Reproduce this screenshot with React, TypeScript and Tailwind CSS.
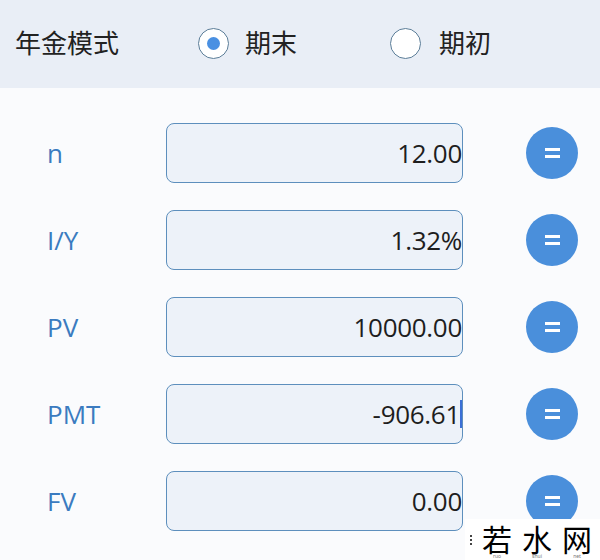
import { useState } from 'react'

const ROWS = [
  { label: 'n', value: '12.00' },
  { label: 'I/Y', value: '1.32%' },
  { label: 'PV', value: '10000.00' },
  { label: 'PMT', value: '-906.61', caret: true },
  { label: 'FV', value: '0.00' },
]

const MARK = [
  { char: '若', sub: 'ruo' },
  { char: '水', sub: 'shui' },
  { char: '网', sub: 'net' },
]

function Radio({ checked }: { checked: boolean }) {
  return (
    <span className="w-[31px] h-[31px] rounded-full border-[1.5px] border-[#5b7d98] bg-white flex items-center justify-center">
      {checked && <span className="w-[13px] h-[13px] rounded-full bg-[#4a90e2]" />}
    </span>
  )
}

function EqualsButton() {
  return (
    <button className="w-[52px] h-[52px] rounded-full bg-[#4a8fdb] flex flex-col items-center justify-center gap-[4px] shrink-0">
      <span className="w-[15px] h-[3px] bg-white" />
      <span className="w-[15px] h-[3px] bg-white" />
    </button>
  )
}

export default function App() {
  const [mode, setMode] = useState<'end' | 'begin'>('end')

  return (
    <div
      className="relative w-[600px] h-[560px] overflow-hidden bg-[#fafbfd]"
      style={{ fontFamily: '"Noto Sans", "Noto Sans CJK SC", sans-serif' }}
    >
      {/* Annuity mode */}
      <div className="h-[88px] bg-[#e9eef6] flex items-center pl-[15px] pb-[2px]">
        <span className="text-[26px] text-[#222] w-[183px]">年金模式</span>
        <button onClick={() => setMode('end')} className="flex items-center gap-[16px] w-[192px]">
          <Radio checked={mode === 'end'} />
          <span className="text-[26px] text-[#222]">期末</span>
        </button>
        <button onClick={() => setMode('begin')} className="flex items-center gap-[18px]">
          <Radio checked={mode === 'begin'} />
          <span className="text-[26px] text-[#222]">期初</span>
        </button>
      </div>

      {/* Inputs */}
      <div className="flex flex-col gap-[27px] pt-[35px]">
        {ROWS.map(row => (
          <div key={row.label} className="flex items-center h-[60px]">
            <span
              className="w-[166px] pl-[47px] text-[26px] text-[#3b7bc0]"
              style={{ fontFamily: '"Open Sans", sans-serif' }}
            >
              {row.label}
            </span>
            <div className="w-[297px] h-[60px] rounded-[8px] border-[1.5px] border-[#5d8fbd] bg-[#edf2f9] flex items-center justify-end">
              <span
                className="text-[26px] text-[#1e1e1e] tracking-[-0.3px]"
                style={{ fontFamily: '"Open Sans", sans-serif' }}
              >
                {row.value}
              </span>
              {row.caret && <span className="w-[2px] h-[28px] bg-[#3b6fd6]" />}
            </div>
            <div className="ml-[63px]">
              <EqualsButton />
            </div>
          </div>
        ))}
      </div>

      {/* Watermark */}
      <div className="absolute right-0 bottom-0 w-[135px] h-[41px] bg-white flex items-start whitespace-nowrap pl-[5px] pt-[4px]">
        <div className="flex flex-col gap-[2px] mr-[10px] mt-[12px]">
          <span className="w-[2px] h-[2px] bg-[#444]" />
          <span className="w-[2px] h-[2px] bg-[#444]" />
          <span className="w-[2px] h-[2px] bg-[#444]" />
        </div>
        <div className="flex gap-[10px]">
          {MARK.map(m => (
            <div key={m.char} className="w-[30px] flex flex-col items-center">
              <span
                className="text-[30px] leading-[30px] text-black"
                style={{ fontFamily: '"Noto Sans CJK SC", sans-serif' }}
              >
                {m.char}
              </span>
              <span className="text-[5px] leading-[5px] text-[#777] mt-[1px]">{m.sub}</span>
            </div>
          ))}
        </div>
      </div>
    </div>
  )
}
